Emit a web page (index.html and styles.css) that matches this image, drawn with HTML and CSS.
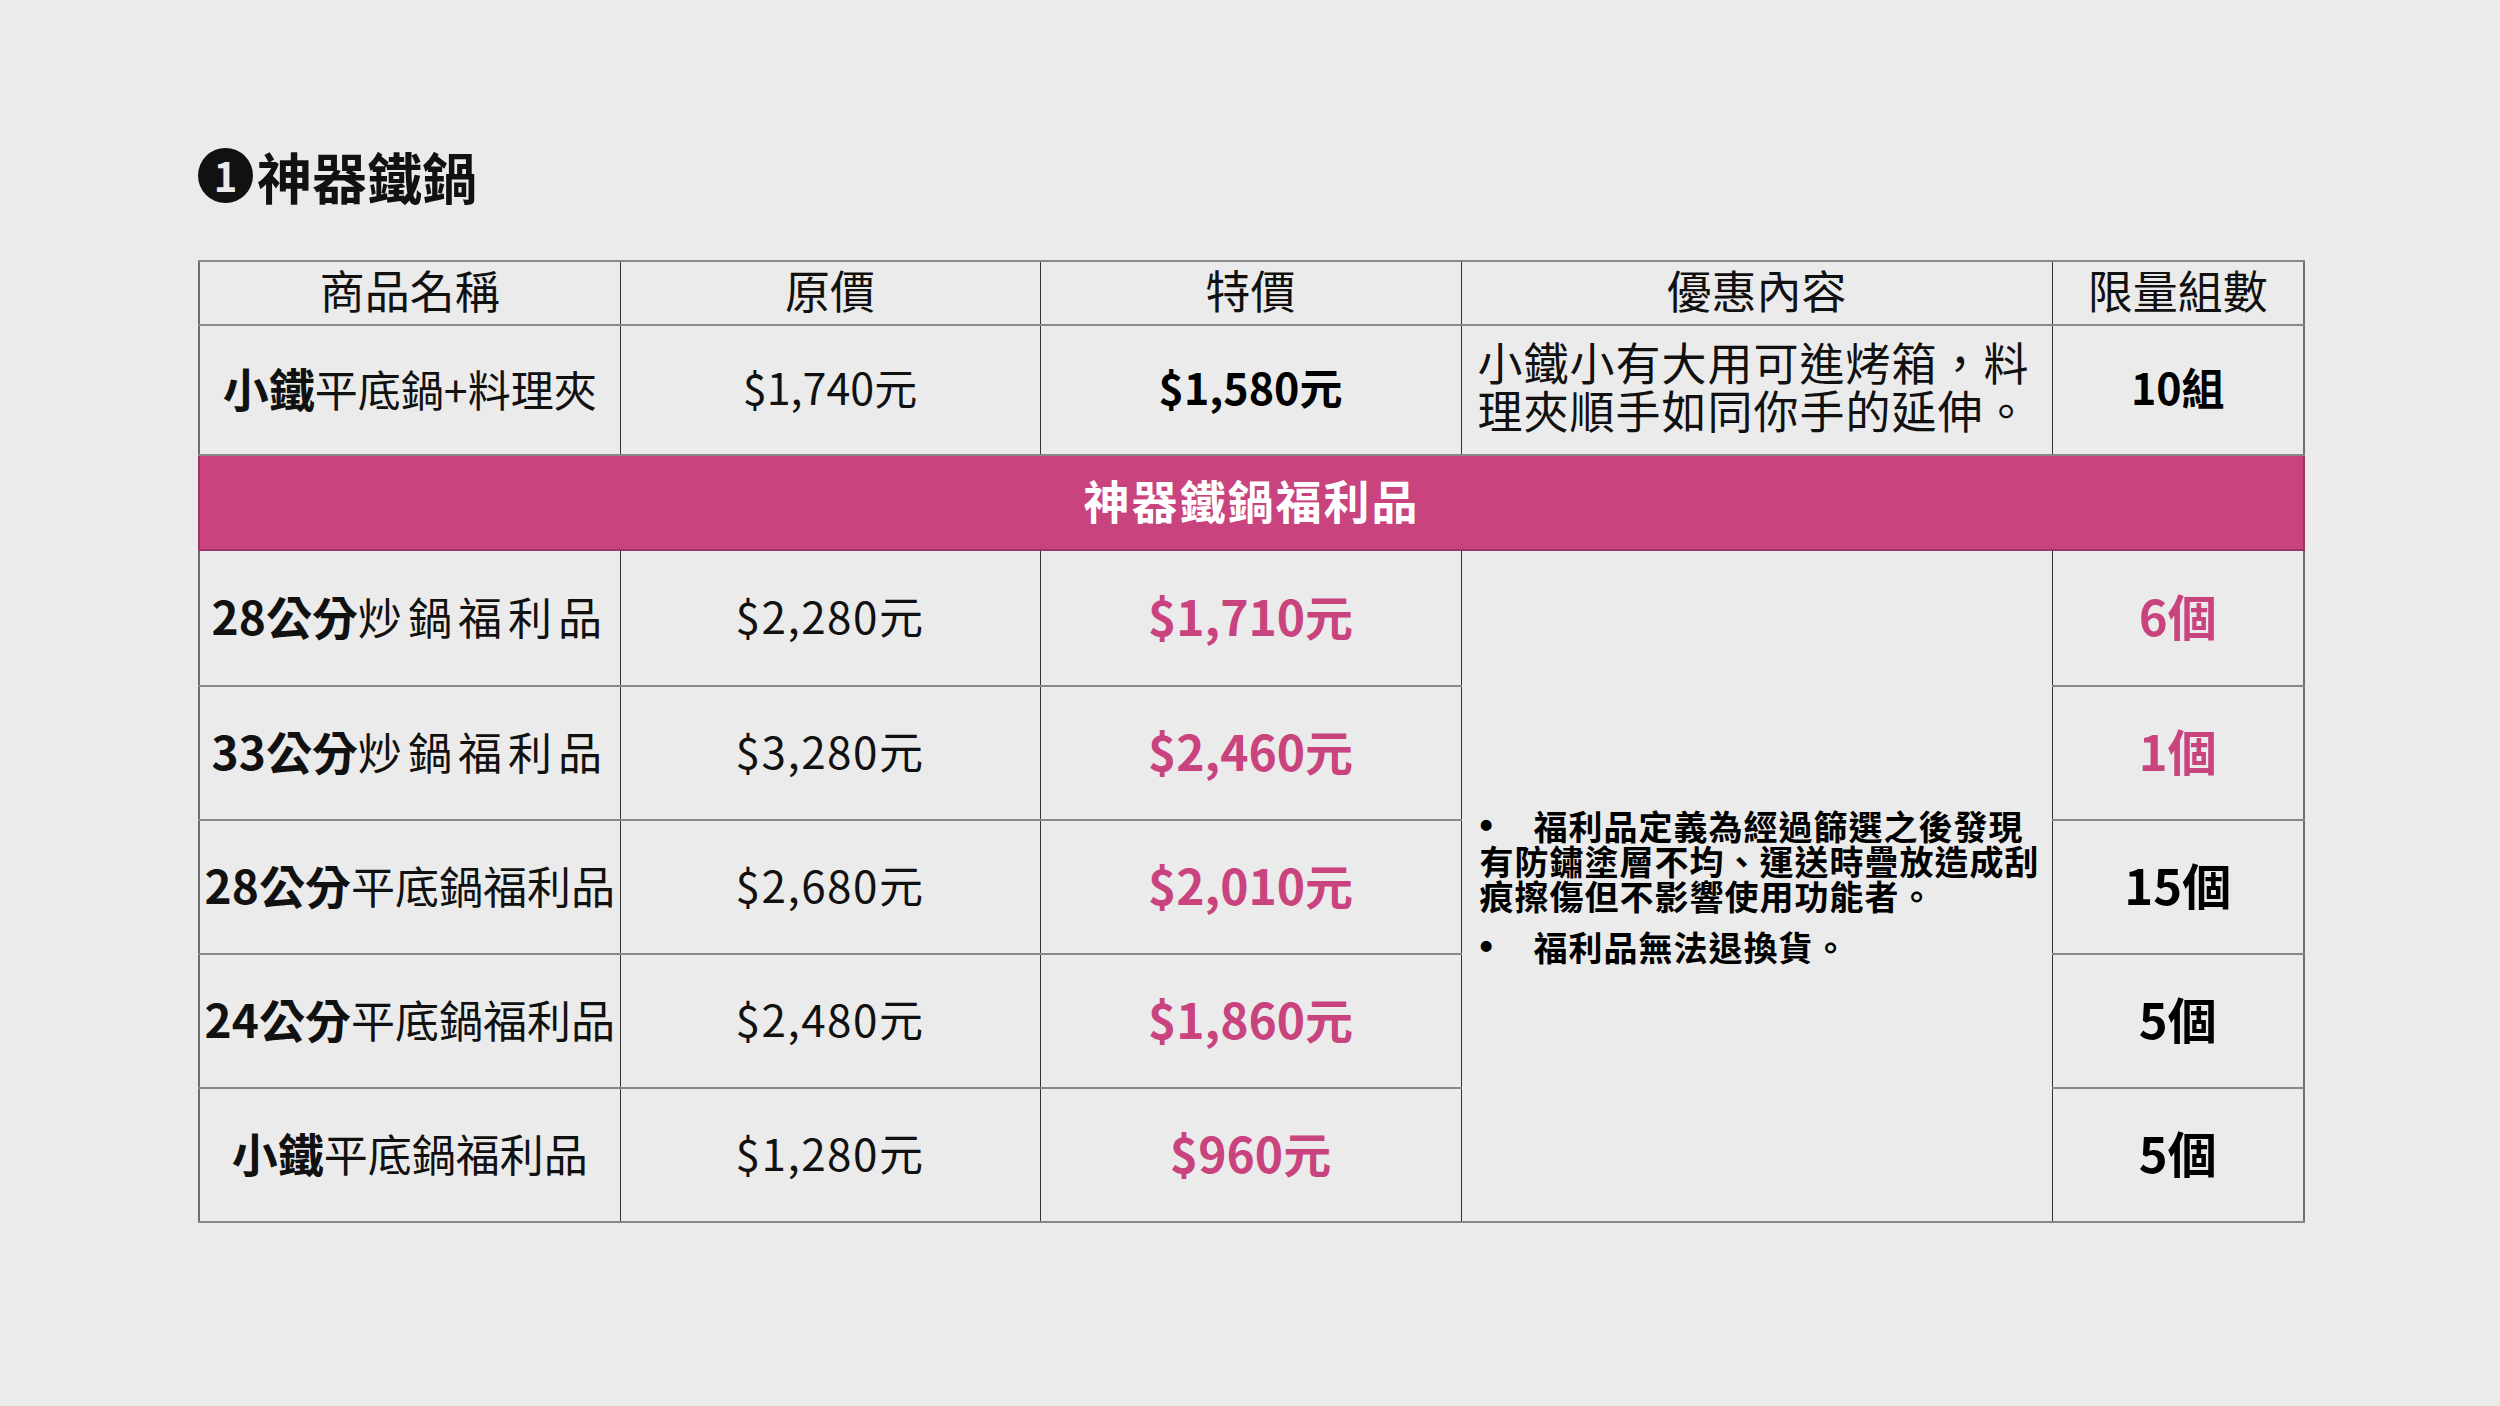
FILE: index.html
```html
<!DOCTYPE html>
<html lang="zh-Hant">
<head>
<meta charset="utf-8">
<title>神器鐵鍋</title>
<link rel="stylesheet" href="styles.css">
</head>
<body>
<main class="page">
  <h1 class="title"><span class="num">1</span>神器鐵鍋</h1>
  <table class="price-table">
    <colgroup>
      <col class="c-name"><col class="c-orig"><col class="c-sale"><col class="c-desc"><col class="c-qty">
    </colgroup>
    <thead>
      <tr class="row-head">
        <th>商品名稱</th><th>原價</th><th>特價</th><th>優惠內容</th><th>限量組數</th>
      </tr>
    </thead>
    <tbody>
      <tr class="row-main">
        <td class="name"><b>小鐵</b>平底鍋+料理夾</td>
        <td class="orig">$1,740元</td>
        <td class="sale">$1,580元</td>
        <td class="desc">小鐵小有大用可進烤箱，料理夾順手如同你手的延伸。</td>
        <td class="qty">10組</td>
      </tr>
      <tr class="row-band">
        <td colspan="5">神器鐵鍋福利品</td>
      </tr>
      <tr class="row-item first">
        <td class="name"><b>28公分</b><span class="wide">炒鍋福利品</span></td>
        <td class="orig wide-num">$2,280元</td>
        <td class="sale pink">$1,710元</td>
        <td class="notes" rowspan="5">
          <ul class="note-list">
            <li class="note">福利品定義為經過篩選之後發現有防鏽塗層不均、運送時疊放造成刮痕擦傷但不影響使用功能者。</li>
            <li class="note">福利品無法退換貨。</li>
          </ul>
        </td>
        <td class="qty pink">6個</td>
      </tr>
      <tr class="row-item">
        <td class="name"><b>33公分</b><span class="wide">炒鍋福利品</span></td>
        <td class="orig wide-num">$3,280元</td>
        <td class="sale pink">$2,460元</td>
        <td class="qty pink">1個</td>
      </tr>
      <tr class="row-item">
        <td class="name"><b>28公分</b>平底鍋福利品</td>
        <td class="orig wide-num">$2,680元</td>
        <td class="sale pink">$2,010元</td>
        <td class="qty">15個</td>
      </tr>
      <tr class="row-item">
        <td class="name"><b>24公分</b>平底鍋福利品</td>
        <td class="orig wide-num">$2,480元</td>
        <td class="sale pink">$1,860元</td>
        <td class="qty">5個</td>
      </tr>
      <tr class="row-item">
        <td class="name"><b>小鐵</b>平底鍋福利品</td>
        <td class="orig wide-num">$1,280元</td>
        <td class="sale pink">$960元</td>
        <td class="qty">5個</td>
      </tr>
    </tbody>
  </table>
</main>
</body>
</html>
```

FILE: styles.css
```css
html, body {
  margin: 0;
  padding: 0;
  background: #ebebeb;
}

body {
  width: 2500px;
  height: 1406px;
  overflow: hidden;
  font-family: "Noto Sans CJK TC", "Noto Sans", sans-serif;
  color: #111;
}

.page {
  padding: 140px 0 0 198px;
}

.title {
  margin: 0 0 50px 0;
  height: 70px;
  display: flex;
  align-items: center;
  font-size: 55px;
  font-weight: 700;
  line-height: 70px;
  color: #111;
}

.num {
  display: inline-flex;
  align-items: center;
  justify-content: center;
  width: 55px;
  height: 55px;
  border-radius: 50%;
  background: #111;
  color: #ebebeb;
  font-size: 40px;
  font-weight: 700;
  line-height: 1;
  margin-right: 4px;
}

.price-table {
  width: 2105px;
  table-layout: fixed;
  border-collapse: collapse;
  border: 2px solid #6e6e6e;
}

.c-name { width: 421px; }
.c-orig { width: 420px; }
.c-sale { width: 421px; }
.c-desc { width: 591px; }
.c-qty  { width: 252px; }

.price-table th,
.price-table td {
  border-left: 1px solid #333;
  border-right: 1px solid #333;
  border-top: 2px solid #888;
  border-bottom: 2px solid #888;
  padding: 0 0 7px 0;
  text-align: center;
  vertical-align: middle;
  white-space: nowrap;
}

.row-head {
  height: 64px;
}

.row-head th {
  font-size: 45px;
  font-weight: 400;
  line-height: 1;
  color: #111;
}

.row-main {
  height: 130px;
}

.row-main td {
  font-size: 43px;
  line-height: 1;
}

.name {
  font-size: 44px;
  font-weight: 400;
}

.name b {
  font-weight: 700;
  font-size: 46px;
}

.wide {
  letter-spacing: 6px;
}

.orig {
  font-size: 44px;
  font-weight: 400;
}

.wide-num {
  letter-spacing: 1.5px;
}

.sale {
  font-size: 48px;
  font-weight: 700;
  color: #000;
}

.qty {
  font-size: 49px;
  font-weight: 700;
  color: #000;
}

.pink {
  color: #c9437f;
}

.row-main .desc {
  white-space: normal;
  text-align: left;
  padding: 0 10px 8px 16px;
  font-size: 45px;
  line-height: 48px;
  letter-spacing: 1px;
}

.row-band {
  height: 95px;
}

.row-band td {
  background: #c9437f;
  border-top: 2px solid #9c3566;
  border-bottom: 2px solid #9c3566;
  border-left: 2px solid #9c3566;
  border-right: 2px solid #9c3566;
  color: #fff;
  font-size: 46px;
  font-weight: 700;
  letter-spacing: 2px;
  line-height: 1;
}

.row-item {
  height: 134px;
}

.row-item.first {
  height: 136px;
}

.row-item td {
  line-height: 1;
}

.row-item td.notes {
  white-space: normal;
  text-align: left;
  padding: 0 8px 0 18px;
}

.note-list {
  list-style: none;
  margin: 0;
  padding: 0;
}

.note {
  margin: 0;
  width: 566px;
  font-size: 34px;
  font-weight: 700;
  line-height: 35px;
  letter-spacing: 1px;
  color: #000;
}

.note::before {
  content: "•";
  display: inline-block;
  width: 54px;
  height: 35px;
  font-family: "Liberation Sans", sans-serif;
  font-size: 38px;
  line-height: 35px;
  letter-spacing: 0;
  vertical-align: top;
}

.note + .note {
  margin-top: 16px;
}
```
